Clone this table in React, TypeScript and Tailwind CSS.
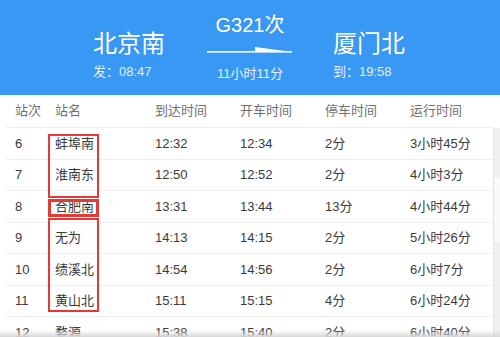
import React from 'react';

const rows = [
  { no: '6', name: '蚌埠南', arrive: '12:32', depart: '12:34', stop: '2分', run: '3小时45分' },
  { no: '7', name: '淮南东', arrive: '12:50', depart: '12:52', stop: '2分', run: '4小时3分' },
  { no: '8', name: '合肥南', arrive: '13:31', depart: '13:44', stop: '13分', run: '4小时44分' },
  { no: '9', name: '无为', arrive: '14:13', depart: '14:15', stop: '2分', run: '5小时26分' },
  { no: '10', name: '绩溪北', arrive: '14:54', depart: '14:56', stop: '2分', run: '6小时7分' },
  { no: '11', name: '黄山北', arrive: '15:11', depart: '15:15', stop: '4分', run: '6小时24分' },
  { no: '12', name: '婺源', arrive: '15:38', depart: '15:40', stop: '2分', run: '6小时40分' },
];

const font = { fontFamily: '"Liberation Sans", "Noto Sans CJK SC", sans-serif' };

export default function App() {
  return (
    <div className="relative w-[500px] h-[337px] overflow-hidden bg-white" style={font}>
      {/* top banner */}
      <div className="h-[95px] bg-[#3898f3] flex pl-[93px] text-white">
        <div className="w-[107px] pt-[28px]">
          <div className="text-[24px] leading-[32px]">北京南</div>
          <div className="mt-[3px] text-[13px] leading-[18px] text-[#e3f0fd]">发：08:47</div>
        </div>
        <div className="w-[100px] flex flex-col items-center pt-[13px]">
          <div className="text-[20px] leading-[24px]">G321次</div>
          <svg width="86" height="10" viewBox="0 0 86 10" className="mt-[9px]">
            <rect x="0" y="5" width="85" height="1.6" fill="#fff" />
            <polygon points="48,1 85,6 48,6" fill="#fff" />
          </svg>
          <div className="mt-[9px] text-[13px] leading-[18px] text-[#e3f0fd]">11小时11分</div>
        </div>
        <div className="ml-[33px] pt-[28px]">
          <div className="text-[24px] leading-[32px]">厦门北</div>
          <div className="mt-[3px] text-[13px] leading-[18px] text-[#e3f0fd]">到：19:58</div>
        </div>
      </div>

      {/* table */}
      <div className="flex">
        <div className="w-[493px]">
          <div className="grid grid-cols-[40px_100px_85px_85px_85px_1fr] ml-[5px] pl-[10px] h-[33px] items-center text-[13px] text-[#707070] border-b border-[#eeeeee]">
            <span>站次</span>
            <span>站名</span>
            <span>到达时间</span>
            <span>开车时间</span>
            <span>停车时间</span>
            <span>运行时间</span>
          </div>
          {rows.map((r) => (
            <div
              key={r.no}
              className="grid grid-cols-[40px_100px_85px_85px_85px_1fr] ml-[5px] pl-[10px] h-[31.5px] items-center text-[13px] text-[#3a3a3a] border-b border-[#eeeeee]"
            >
              <span>{r.no}</span>
              <span>{r.name}</span>
              <span>{r.arrive}</span>
              <span>{r.depart}</span>
              <span>{r.stop}</span>
              <span>{r.run}</span>
            </div>
          ))}
        </div>
        <div className="w-[7px] flex flex-col">
          <div className="h-[33px]" />
          <div className="h-[50px] bg-[#f0f0f0] border-l border-[#e3e3e3]" />
          <div className="h-[64px] bg-[#fafafa] border-l border-[#e3e3e3]" />
          <div className="flex-1 bg-[#f0f0f0] border-l border-[#e3e3e3]" />
        </div>
      </div>

      {/* red highlight boxes */}
      <div className="absolute left-[48px] top-[134px] w-[51px] h-[64px] border-2 border-[#e53935]" />
      <div className="absolute left-[48px] top-[199px] w-[51px] h-[18px] border-[3px] border-[#e53935]" />
      <div className="absolute left-[48px] top-[218px] w-[51px] h-[94px] border-2 border-[#e53935]" />

      {/* bottom shade */}
      <div className="absolute left-0 right-0 bottom-0 h-[7px] bg-gradient-to-b from-transparent to-[#d8d8d8]" />
    </div>
  );
}
